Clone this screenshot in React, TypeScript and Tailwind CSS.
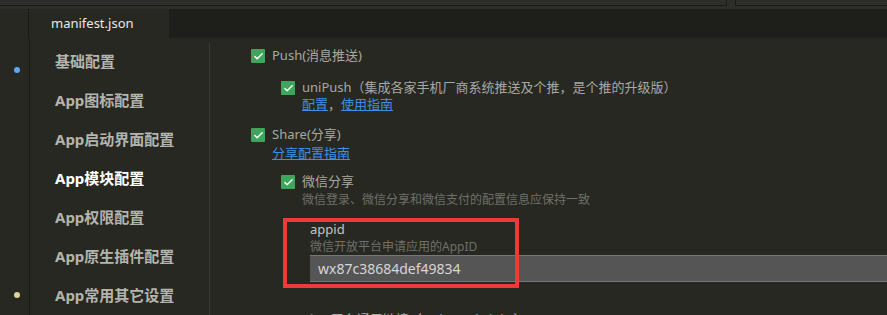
import { Check } from "lucide-react"

type NavItem = {
  name: string
  active?: boolean
}

const navItems: NavItem[] = [
  { name: "基础配置" },
  { name: "App图标配置" },
  { name: "App启动界面配置" },
  { name: "App模块配置", active: true },
  { name: "App权限配置" },
  { name: "App原生插件配置" },
  { name: "App常用其它设置" },
]

const font = "font-['Noto_Sans','Noto_Sans_CJK_SC',sans-serif]"

function Checkbox() {
  return (
    <span className="flex h-[14px] w-[14px] shrink-0 items-center justify-center rounded-[1px] bg-[#3fa55c]">
      <Check size={11} strokeWidth={3} className="text-white" />
    </span>
  )
}

export default function App() {
  return (
    <div
      className={`relative h-[315px] w-[887px] overflow-hidden bg-[#272822] ${font}`}
    >
      {/* top strip */}
      <div className="flex h-[9px] bg-[#2d2e29]">
        <div className="h-[6px] w-[727px] border-b border-r border-[#1b1c18]" />
        <div className="ml-[8px] h-[6px] flex-1 border-b border-l border-[#1b1c18]" />
      </div>

      {/* tab bar */}
      <div className="flex h-[29px] bg-[#1e1f1b]">
        <div className="w-[29px] border-r border-[#1a1b17] bg-[#272822]" />
        <div className="flex w-[140px] items-center bg-[#272822] pl-[22px] text-[13px] text-[#e8e8e8]">
          manifest.json
        </div>
      </div>

      <div className="flex h-[277px]">
        {/* gutter */}
        <div className="relative w-[30px] shrink-0 border-r border-[#1a1b17]">
          <span className="absolute left-[14px] top-[29px] h-[6px] w-[6px] rounded-full bg-[#5fa8f0]" />
          <span className="absolute left-[14px] top-[254px] h-[6px] w-[6px] rounded-full bg-[#ddd49a]" />
        </div>

        {/* sidebar */}
        <nav className="w-[179px] shrink-0 pl-[25px] pt-[4px]">
          <ul>
            {navItems.map(({ name, active }) => (
              <li
                key={name}
                className={`flex h-[39px] items-center text-[15px] font-bold ${
                  active ? "text-white" : "text-[#b4b4ae]"
                }`}
              >
                {name}
              </li>
            ))}
          </ul>
        </nav>

        {/* content */}
        <div className="mt-[5px] flex-1 border-l border-[#3a3b35] pl-[41px] pt-[4px] text-[13px] text-[#a8a8a2]">
          <div className="flex h-[18px] items-center gap-[7px]">
            <Checkbox />
            <span>Push(消息推送)</span>
          </div>

          <div className="ml-[30px] mt-[15px]">
            <div className="flex h-[16px] items-center gap-[7px]">
              <Checkbox />
              <span>uniPush（集成各家手机厂商系统推送及个推，是个推的升级版）</span>
            </div>
            <div className="ml-[21px] h-[16px] leading-[16px]">
              <span className="text-[#3c8fe4] underline">配置</span>
              <span>，</span>
              <span className="text-[#3c8fe4] underline">使用指南</span>
            </div>
          </div>

          <div className="mt-[15px] flex h-[16px] items-center gap-[7px]">
            <Checkbox />
            <span>Share(分享)</span>
          </div>
          <div className="ml-[21px] mt-[2px] h-[16px] leading-[16px]">
            <span className="text-[#3c8fe4] underline">分享配置指南</span>
          </div>

          <div className="ml-[30px] mt-[13px]">
            <div className="flex h-[16px] items-center gap-[7px]">
              <Checkbox />
              <span>微信分享</span>
            </div>
            <div className="ml-[21px] mt-[2px] h-[16px] text-[12px] leading-[16px] text-[#6f706a]">
              微信登录、微信分享和微信支付的配置信息应保持一致
            </div>

            <div className="ml-[29px] mt-[13px]">
              <div className="h-[16px] leading-[16px] text-[#c6c6c0]">appid</div>
              <div className="mt-[2px] h-[16px] text-[12px] leading-[16px] text-[#6f706a]">
                微信开放平台申请应用的AppID
              </div>
              <div className="flex h-[27px] items-center border-y border-[#777] bg-[#555555] pl-[8px] text-[14px] text-[#d6d6d6]">
                wx87c38684def49834
              </div>
              <div className="mt-[29px] h-[16px] leading-[16px] text-[#a8a8a2]">
                iOS平台通用链接（Universal Links）
              </div>
            </div>
          </div>
        </div>
      </div>

      {/* annotation box */}
      <div className="absolute left-[283px] top-[218px] h-[70px] w-[236px] border-[4px] border-[#f03a3a]" />
    </div>
  )
}
